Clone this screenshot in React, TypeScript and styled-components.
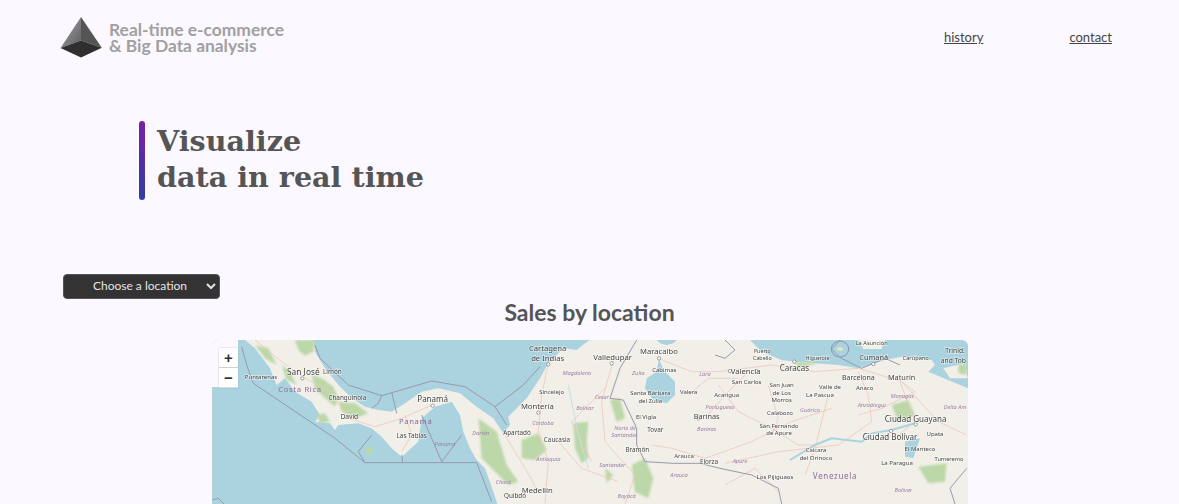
import React from "react";
import styled, { createGlobalStyle } from "styled-components";

const Global = createGlobalStyle`
  html, body { margin: 0; padding: 0; background: #fbf9ff; overflow: hidden; }
  #root { height: 504px; }
`;
const Page = styled.div`
  height: 504px; display: flex; flex-direction: column; overflow: hidden;
  font-family: Lato, "Noto Sans", sans-serif; color: #555;
`;
const Header = styled.header`
  display: flex; justify-content: space-between; align-items: center;
  height: 74px; padding: 0 67px 0 60px; box-sizing: border-box;
`;
const Brand = styled.div`display: flex; align-items: center; gap: 7px;`;
const BrandText = styled.div`
  font-size: 17.4px; font-weight: 700; line-height: 16px; color: #a0a0a0; padding-top: 2px;
`;
const Nav = styled.nav`display: flex; gap: 86px;`;
const NavLink = styled.a`
  font-size: 13px; color: #444; text-decoration: underline; cursor: pointer;
`;
const Hero = styled.section`
  display: flex; gap: 12px; height: 79px; margin: 47px 0 0 139px; align-items: stretch;
`;
const Accent = styled.div`
  width: 6px; border-radius: 3px; background: linear-gradient(#7b1fa2, #303f9f);
`;
const HeroTitle = styled.h1`
  margin: -4px 0 0; align-self: center; font-family: "DejaVu Serif", Georgia, serif; font-weight: 700;
  font-size: 28.6px; line-height: 36px; color: #555;
`;
const Picker = styled.select`
  display: block; width: 157px; height: 25px; margin: 74px 0 0 63px; padding: 0 0 2px 9px;
  font-family: Lato, sans-serif; font-size: 12px; text-align: center; color: #e4e4e4;
  background: #333; border: 1px solid #555; border-radius: 4px;
`;
const Title = styled.h2`
  margin: 0; height: 41px; box-sizing: border-box; text-align: center;
  font-size: 23px; line-height: 27px; font-weight: 700; color: #555;
`;
const MapFrame = styled.div`
  position: relative; flex: 1; width: 756px; margin-left: 212px; overflow: hidden;
  border-radius: 6px 6px 0 0;
`;
const MapArt = styled.svg`display: block; width: 756px; height: 164px; filter: blur(0.3px);`;
const ZoomCorner = styled.div`
  position: absolute; left: 0; top: 0; width: 26px; height: 47px; background: #fbf9ff;
  padding: 8px 0 0 7px; box-sizing: border-box;
`;
const ZoomBtn = styled.button`
  display: block; width: 19px; height: 20px; padding: 0; border: 0; background: #fff; color: #333;
  border-bottom: 1px solid #ddd; font: 700 15px/19px "Liberation Sans", sans-serif;
  box-shadow: 0 0 1px #999;
`;

const land = "1155,15 1140,25 1115,45 1075,40 1030,85 1005,130 965,190 910,245 915,270 895,295 865,250 815,215 765,175 700,160 650,170 600,205 560,230 520,225 480,215 440,190 400,150 360,100 330,50 325,15 120,15 150,40 195,100 215,150 240,130 270,170 320,200 345,240 330,260 375,265 390,285 400,270 460,265 500,280 530,305 560,340 590,365 640,320 650,250 690,215 740,200 765,240 775,290 795,340 815,375 840,400 865,470 877,507 2290,507 2290,160 2170,110 2190,90 2180,75 2090,65 2040,75 1960,100 1900,90 1830,85 1770,80 1730,75 1670,50 1635,15 1415,15 1405,25 1385,30 1365,25 1355,15";
const lake = "1362,70 1355,110 1325,130 1320,160 1345,195 1385,205 1410,180 1410,140 1375,105";
const greens = [
  "270,15 330,15 325,50 300,62 280,45",
  "150,30 190,40 215,90 180,70",
  "230,90 255,110 275,150 245,135",
  "320,120 350,130 385,155 400,190 390,215 360,190 330,160",
  "400,200 450,205 490,235 450,250 410,230",
  "335,240 360,235 375,260 345,265",
  "480,335 505,340 500,360 485,355",
  "1105,265 1150,260 1145,320 1150,370 1130,385 1110,340",
  "950,315 1000,295 1025,345 990,375 950,370",
  "820,250 875,290 905,390 940,440 910,450 870,410 830,370",
  "1215,195 1245,190 1260,250 1235,260",
  "1280,390 1320,370 1345,430 1330,490 1290,470",
  "2140,395 2225,385 2220,440 2170,445",
  "2060,210 2110,195 2130,240 2080,260",
  "1200,400 1225,420 1205,445",
  "2260,90 2285,85 2285,120 2260,115",
  "1840,85 1780,100 1770,80",
];
const borders = [
  "110,35 125,90 145,145 390,310 480,383 815,383",
  "330,30 345,70 430,150 530,182 680,138 780,155 870,215 955,150 1005,95",
  "1295,15 1245,100 1215,190 1255,195 1295,280 1295,330 1320,380 1405,385 1485,385 1545,400 1640,420 1720,460 1730,507",
  "530,182 520,205 500,220",
  "560,170 575,235",
  "480,383 460,350 500,300",
  "593,383 590,360",
  "710,380 650,240",
  "710,380 770,300",
  "870,215 905,270",
  "815,383 860,500",
  "2250,507 2235,460 2285,400",
  "1970,100 1905,68 1880,42 1905,15",
  "2085,90 2040,70 1970,100",
  "1560,15 1590,45 1560,70 1530,60",
  "21,495 40,490 57,507",
];
const roads = [
  "150,15 230,80 300,130 380,170 430,250 510,275 590,250 680,210",
  "1030,85 1010,180 1000,290 1030,380 1020,505",
  "1225,75 1190,200 1200,320 1290,420 1260,507",
  "1360,70 1460,110 1540,110 1700,90 1830,110 1960,100 2090,140 2200,260 2285,300",
  "1540,150 1600,230 1700,280 1780,330 1835,330",
  "1870,180 1830,340 1800,420",
  "1960,110 1990,180 2000,260 1900,330 1720,350 1560,385",
  "1340,330 1400,340 1500,370 1640,320 1760,260 1880,220",
  "1200,160 1100,260 1160,380",
  "2085,140 2130,260 2080,300",
  "600,240 620,300 590,350",
  "900,300 960,400 1000,470",
  "1060,320 1130,400 1240,440",
  "1500,250 1560,180 1620,120",
  "1690,150 1720,250 1700,300",
  "1450,180 1510,130 1600,130",
  "1960,240 2030,220 2130,170 2090,140",
  "1560,450 1650,400 1720,470",
];
const cities: [number, number, string, number][] = [
  [295,119,"San José",25],[382,117,"Limón",19],[168,132,"Puntarenas",18],[427,194,"Changuinola",19],[433,252,"David",20],
  [683,201,"Panamá",24],[620,310,"Las Tablas",19],
  [1028,49,"Cartagena",23],[1028,78,"de Indias",23],[1223,74,"Valledupar",23],[1362,57,"Maracaibo",23],[1378,112,"Cabimas",18],
  [1040,178,"Sincelejo",18],[997,222,"Montería",23],[936,301,"Apartadó",19],[1056,321,"Caucasia",19],[1336,181,"Santa Bárbara",18],
  [1336,203,"del Zulia",18],[1451,177,"Valera",18],[1323,251,"El Vigía",18],[1505,251,"Barinas",22],[1351,291,"Tovar",19],[1297,350,"Bramón",19],
  [1437,370,"Arauca",18],[1512,386,"Elorza",19],[997,475,"Medellín",23],[930,490,"Quibdó",19],
  [1672,53,"Puerto",16],[1672,75,"Cabello",16],[1838,74,"Higuerote",15],[2006,74,"Cumaná",22],[2132,74,"Carúpano",17],
  [1622,116,"Valencia",23],[1625,146,"San Carlos",18],[1768,108,"Caracas",24],[1730,157,"San Juan",18],[1730,179,"de Los",18],
  [1730,201,"Morros",18],[1875,163,"Valle de",18],[1845,186,"La Pascua",18],[1960,136,"Barcelona",21],[2090,135,"Maturín",22],[1979,166,"Anaco",18],
  [1565,185,"Acarigua",18],[1725,241,"Calabozo",18],[1722,278,"San Fernando",18],[1722,301,"de Apure",18],[2132,260,"Ciudad Guayana",24],
  [2055,316,"Ciudad Bolívar",24],[2190,304,"Upata",18],[2145,347,"El Manteco",18],[2076,391,"La Paragua",18],[2232,379,"Tumeremo",17],
  [1833,352,"Caicara",18],[1833,375,"del Orinoco",18],[1710,431,"Los Pijiguaos",18],[2250,53,"Trinid.",20],[2245,83,"and Tob",20],[2000,29,"La Asunción",17],
];
const states: [number, number, string][] = [
  [1116,119,"Magdaleno"],[1190,193,"Cesar"],[1140,225,"Bolívar"],[1014,270,"Córdoba"],[827,299,"Darién"],[1260,285,"Norte de"],[1258,307,"Santander"],
  [1300,120,"Zulia"],[1500,124,"Lara"],[1545,221,"Portugueso"],[1505,289,"Barinas"],[1030,379,"Antioquia"],[1222,397,"Santander"],[895,448,"Chocó"],[1265,490,"Boyacá"],[1422,427,"Arauca"],
  [1815,232,"Guárico"],[2000,216,"Anzoátegui"],[2092,188,"Monagas"],[2250,222,"Delta Am"],[1605,385,"Apure"],[2095,472,"Bolívar"],[720,332,"Panamá"],
];
const countries: [number, number, string, number][] = [
  [285,172,"Costa Rica",23],[632,268,"Panamá",23],[1890,431,"Venezuela",24],
];
const stops: [number, number][] = [[292,130],[683,212],[1030,88],[1220,85],[1362,70],[1000,233],[1480,250],[1655,108],[1768,80],[2005,87],[2132,268],[2058,288],[1575,108]];

export default function App() {
  return (
    <Page>
      <Global />
      <Header>
        <Brand>
          <svg width="42" height="42" viewBox="60 16 42 42">
            <defs>
              <linearGradient id="faceL" x1="0" y1="0" x2="1" y2="1">
                <stop offset="0" stopColor="#a8a8a8" />
                <stop offset="1" stopColor="#5c5c5c" />
              </linearGradient>
            </defs>
            <path d="M81 17 L60.5 48 L81 40.5 Z" fill="url(#faceL)" />
            <path d="M81 17 L101.8 47.8 L81 40.5 Z" fill="#555" />
            <path d="M60.5 48 L81 40.5 L101.8 47.8 L81 57.5 Z" fill="#2f2f2f" />
          </svg>
          <BrandText>Real-time e-commerce<br />&amp; Big Data analysis</BrandText>
        </Brand>
        <Nav>
          <NavLink>history</NavLink>
          <NavLink>contact</NavLink>
        </Nav>
      </Header>
      <Hero>
        <Accent />
        <HeroTitle>Visualize<br />data in real time</HeroTitle>
      </Hero>
      <Picker defaultValue="">
        <option value="">Choose a location</option>
      </Picker>
      <Title>Sales by location</Title>
      <MapFrame>
        <MapArt viewBox="21 15 2268 492" preserveAspectRatio="none">
          <defs>
            <filter id="soft" x="-5%" y="-5%" width="110%" height="110%">
              <feGaussianBlur stdDeviation="3" />
            </filter>
          </defs>
          <rect x="21" y="15" width="2268" height="492" fill="#aad3df" />
          <polygon points={land} fill="#f2efe9" />
          <polygon points={lake} fill="#aad3df" />
          <ellipse cx="1905" cy="42" rx="26" ry="24" fill="none" stroke="#8d93ad" strokeWidth="3" />
          <ellipse cx="1905" cy="42" rx="10" ry="5" fill="#dfe6c4" />
          <polygon points="1960,15 2040,15 2030,42 1975,42" fill="#f2efe9" />
          <polygon points="2215,100 2280,85 2288,130 2235,130" fill="#f2efe9" />
          <polygon points="2100,320 2145,310 2125,370 2100,365" fill="#aad3df" />
          <g filter="url(#soft)">
            {greens.map((p) => <polygon key={p} points={p} fill="#bcd8a8" />)}
          </g>
          {roads.map((p) => <polyline key={p} points={p} fill="none" stroke="#ecc9bd" strokeWidth="2.5" />)}
          <polyline points="1755,375 1830,330 1880,310 1970,320 2000,295 2060,285 2130,265" fill="none" stroke="#aad3df" strokeWidth="6" />
          <polyline points="1090,150 1120,300 1150,400" fill="none" stroke="#c5e0e6" strokeWidth="3" />
          {borders.map((p) => <polyline key={p} points={p} fill="none" stroke="#9a98ad" strokeWidth="3" />)}
          {stops.map(([x, y]) => <circle key={`${x}-${y}`} cx={x} cy={y} r="5" fill="#fff" stroke="#777" strokeWidth="2" />)}
          <g fontFamily="'Noto Sans', sans-serif" textAnchor="middle">
            {cities.map(([x, y, t, s]) => (
              <text key={`${t}${x}`} x={x} y={y} fontSize={s} fill="#444" stroke="#fff" strokeWidth="4" strokeOpacity=".55" paintOrder="stroke">{t}</text>
            ))}
            {states.map(([x, y, t]) => (
              <text key={`${t}${x}`} x={x} y={y} fontSize="17" fontStyle="italic" fill="#9c7fa8">{t}</text>
            ))}
            {countries.map(([x, y, t, s]) => (
              <text key={t} x={x} y={y} fontSize={s} letterSpacing="2" fill="#8d6a9c">{t}</text>
            ))}
          </g>
        </MapArt>
        <ZoomCorner>
          <ZoomBtn>+</ZoomBtn>
          <ZoomBtn>−</ZoomBtn>
        </ZoomCorner>
      </MapFrame>
    </Page>
  );
}
